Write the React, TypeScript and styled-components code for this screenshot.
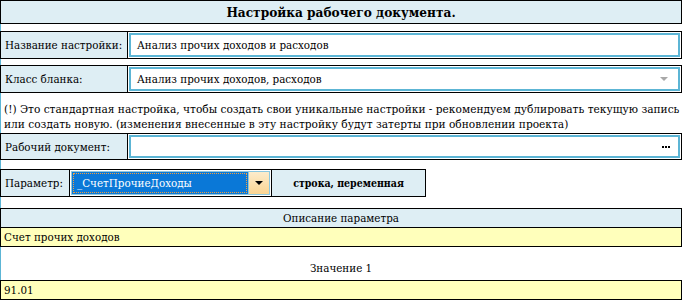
import React from 'react'
import styled, { createGlobalStyle } from 'styled-components'

const GlobalStyle = createGlobalStyle`
  html, body {
    margin: 0;
    padding: 0;
    background: #fff;
  }
`

const labelBg = '#deeef4'
const fieldBorder = '#5cb5d5'
const yellow = '#ffffbb'

const Page = styled.div`
  width: 682px;
  height: 300px;
  overflow: hidden;
  font-family: 'DejaVu Serif Condensed', 'DejaVu Serif', serif;
  font-stretch: condensed;
  font-size: 11.5px;
  color: #000;
  background: linear-gradient(to right, ${fieldBorder} 1px, #fff 1px);
`

const TitleBar = styled.div`
  height: 24px;
  box-sizing: border-box;
  border: 1px solid #000;
  background: ${labelBg};
  font-weight: bold;
  font-size: 13.5px;
  display: flex;
  align-items: center;
  justify-content: center;
`

const FieldRow = styled.div<{ $gap?: number; $width?: number; $height?: number }>`
  display: flex;
  box-sizing: border-box;
  margin-top: ${(p) => p.$gap ?? 7}px;
  height: ${(p) => p.$height ?? 28}px;
  width: ${(p) => (p.$width ? `${p.$width}px` : 'auto')};
  border: 1px solid #000;
`

const Label = styled.div<{ $width: number }>`
  width: ${(p) => p.$width}px;
  flex: none;
  box-sizing: border-box;
  padding-left: 4px;
  background: ${labelBg};
  border-right: 1px solid #000;
  display: flex;
  align-items: center;
  white-space: nowrap;
`

const Cell = styled.div`
  flex: 1;
  padding: 1px;
  display: flex;
`

const InputBox = styled.div`
  flex: 1;
  box-sizing: border-box;
  border: 2px solid ${fieldBorder};
  background: #fff;
  display: flex;
  align-items: center;
  padding: 0 6px 0 6px;
`

const InputText = styled.span`
  flex: 1;
  white-space: nowrap;
`

const DropArrow = styled.span`
  width: 0;
  height: 0;
  border-left: 4px solid transparent;
  border-right: 4px solid transparent;
  border-top: 4px solid #a8a8a8;
  margin-right: 4px;
`

const Dots = styled.span`
  display: flex;
  gap: 1px;
  margin-right: 2px;
`

const Dot = styled.span`
  width: 2px;
  height: 2px;
  background: #000;
`

const Note = styled.div`
  padding: 9px 2px 0 4px;
  font-size: 11.8px;
  line-height: 15px;
  height: 40px;
  box-sizing: border-box;
`

const SelectCell = styled.div`
  width: 199px;
  flex: none;
  box-sizing: border-box;
  border: 1px solid #8cc8e0;
  margin: 1px;
  display: flex;
  background: #0a78d7;
`

const SelectValue = styled.div`
  flex: 1;
  margin: 1px;
  border: 1px dotted #f0a040;
  color: #fff;
  display: flex;
  align-items: center;
  padding-left: 3px;
`

const SelectButton = styled.div`
  width: 20px;
  flex: none;
  background: linear-gradient(#fdeccc, #fbd592);
  border-left: 1px solid #8cc8e0;
  display: flex;
  align-items: center;
  justify-content: center;
`

const BlackArrow = styled.span`
  width: 0;
  height: 0;
  border-left: 4px solid transparent;
  border-right: 4px solid transparent;
  border-top: 4px solid #000;
`

const TypeCell = styled.div`
  flex: 1;
  background: ${labelBg};
  border-left: 1px solid #000;
  font-weight: bold;
  font-size: 10.5px;
  display: flex;
  align-items: center;
  justify-content: center;
`

const Header = styled.div<{ $gap: number }>`
  margin-top: ${(p) => p.$gap}px;
  height: 20px;
  box-sizing: border-box;
  border: 1px solid #000;
  background: ${labelBg};
  display: flex;
  align-items: center;
  justify-content: center;
`

const ValueRow = styled.div<{ $top?: boolean }>`
  height: ${(p) => (p.$top ? 20 : 19)}px;
  box-sizing: border-box;
  border: 1px solid #000;
  border-top-width: ${(p) => (p.$top ? 1 : 0)}px;
  background: ${yellow};
  display: flex;
  align-items: center;
  padding-left: 3px;
`

const Caption = styled.div`
  height: 33px;
  display: flex;
  align-items: center;
  justify-content: center;
  padding-top: 8px;
  box-sizing: border-box;
`

const App = () => {
  return (
    <>
      <GlobalStyle />
      <Page>
        <TitleBar>Настройка рабочего документа.</TitleBar>

        <FieldRow>
          <Label $width={127}>Название настройки:</Label>
          <Cell>
            <InputBox>
              <InputText>Анализ прочих доходов и расходов</InputText>
            </InputBox>
          </Cell>
        </FieldRow>

        <FieldRow $gap={6}>
          <Label $width={127}>Класс бланка:</Label>
          <Cell>
            <InputBox>
              <InputText>Анализ прочих доходов, расходов</InputText>
              <DropArrow />
            </InputBox>
          </Cell>
        </FieldRow>

        <Note>
          (!) Это стандартная настройка, чтобы создать свои уникальные настройки - рекомендуем дублировать текущую запись
          или создать новую. (изменения внесенные в эту настройку будут затерты при обновлении проекта)
        </Note>

        <FieldRow $gap={0} $height={27}>
          <Label $width={127}>Рабочий документ:</Label>
          <Cell>
            <InputBox>
              <InputText />
              <Dots>
                <Dot />
                <Dot />
                <Dot />
              </Dots>
            </InputBox>
          </Cell>
        </FieldRow>

        <FieldRow $gap={9} $width={426}>
          <Label $width={69}>Параметр:</Label>
          <SelectCell>
            <SelectValue>_СчетПрочиеДоходы</SelectValue>
            <SelectButton>
              <BlackArrow />
            </SelectButton>
          </SelectCell>
          <TypeCell>строка, переменная</TypeCell>
        </FieldRow>

        <Header $gap={11}>Описание параметра</Header>
        <ValueRow>Счет прочих доходов</ValueRow>

        <Caption>Значение 1</Caption>
        <ValueRow $top>91.01</ValueRow>
      </Page>
    </>
  )
}

export default App
